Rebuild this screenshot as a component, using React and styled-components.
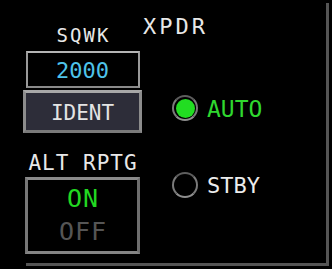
import React from "react";
import styled, { createGlobalStyle } from "styled-components";

const Global = createGlobalStyle`
  html, body { margin: 0; padding: 0; background: #000; }
  body { font-family: "DejaVu Sans Mono", "Liberation Mono", monospace; }
`;

const Screen = styled.div`
  width: 332px;
  height: 269px;
  box-sizing: border-box;
  padding-top: 3px;
  background: #000;
  overflow: hidden;
`;

const Frame = styled.div`
  margin-left: 26px;
  width: 303px;
  height: 263px;
  box-sizing: border-box;
  border-right: 3px solid #555;
  border-bottom: 3px solid #555;
  display: flex;
`;

const LeftCol = styled.div`
  margin-left: -3px;
  width: 119px;
  display: flex;
  flex-direction: column;
  align-items: center;
  padding-top: 23px;
`;

const Label = styled.div`
  color: #e8e8e8;
  font-size: ${(p) => p.$size}px;
  line-height: ${(p) => p.$size}px;
  letter-spacing: ${(p) => p.$ls}px;
  margin-right: ${(p) => -p.$ls}px;
  margin-top: ${(p) => p.$mt || 0}px;
  white-space: pre;
`;

const CodeBox = styled.div`
  margin-top: 6px;
  width: 114px;
  height: 37px;
  box-sizing: border-box;
  border: 2px solid #9a9a9a;
  border-top-color: #b4b4b4;
  border-bottom-color: #8a8a8a;
  display: flex;
  align-items: center;
  justify-content: center;
  color: #4ec3ea;
  font-size: 22px;
  padding-top: 1px;
`;

const IdentButton = styled.div`
  margin-top: 2px;
  width: 119px;
  height: 43px;
  box-sizing: border-box;
  border: 3px solid #8c8c8c;
  border-top-color: #a8a8a8;
  border-bottom-color: #7a7a7a;
  background: #2d2d39;
  display: flex;
  align-items: center;
  justify-content: center;
  color: #e4e4e4;
  font-size: 21px;
  padding-top: 2px;
`;

const ToggleBox = styled.div`
  margin-top: 3px;
  width: 115px;
  height: 77px;
  box-sizing: border-box;
  border: 3px solid #777;
  border-top-color: #8a8a8a;
  border-right-color: #6e6e6e;
  border-bottom-color: #858585;
  display: flex;
  flex-direction: column;
  align-items: center;
  justify-content: center;
  padding-bottom: 2px;
`;

const ToggleOption = styled.div`
  font-size: 25px;
  line-height: 33px;
  letter-spacing: 1px;
  margin-right: -1px;
  color: ${(p) => (p.$active ? "#22d822" : "#555")};
`;

const RightCol = styled.div`
  flex: 1;
  display: flex;
  flex-direction: column;
  padding-top: 13px;
`;

const Title = styled.div`
  color: #e8e8e8;
  font-size: 22px;
  line-height: 22px;
  letter-spacing: 3px;
  margin-left: 1px;
`;

const RadioRow = styled.div`
  display: flex;
  align-items: center;
  gap: 9px;
  margin-left: 30px;
  margin-top: ${(p) => p.$mt}px;
  height: 26px;
`;

const RadioRing = styled.div`
  width: 26px;
  height: 26px;
  box-sizing: border-box;
  border-radius: 50%;
  border: 2px solid #7a7a7a;
  border-top-color: #5e5e5e;
  border-bottom-color: #8e8e8e;
  display: flex;
  align-items: center;
  justify-content: center;
`;

const RadioDot = styled.div`
  width: 19px;
  height: 19px;
  border-radius: 50%;
  background: #22dd22;
`;

const RadioLabel = styled.div`
  font-size: ${(p) => p.$size}px;
  line-height: 26px;
  color: ${(p) => (p.$active ? "#2fd82f" : "#ececec")};
  padding-top: 1px;
`;

export default function App() {
  return (
    <>
      <Global />
      <Screen>
        <Frame>
          <LeftCol>
            <Label $size={19} $ls={2}>SQWK</Label>
            <CodeBox>2000</CodeBox>
            <IdentButton>IDENT</IdentButton>
            <Label $size={21} $ls={1} $mt={20}>ALT RPTG</Label>
            <ToggleBox>
              <ToggleOption $active>ON</ToggleOption>
              <ToggleOption>OFF</ToggleOption>
            </ToggleBox>
          </LeftCol>
          <RightCol>
            <Title>XPDR</Title>
            <RadioRow $mt={57}>
              <RadioRing>
                <RadioDot />
              </RadioRing>
              <RadioLabel $active $size={23}>AUTO</RadioLabel>
            </RadioRow>
            <RadioRow $mt={51}>
              <RadioRing />
              <RadioLabel $size={22}>STBY</RadioLabel>
            </RadioRow>
          </RightCol>
        </Frame>
      </Screen>
    </>
  );
}
